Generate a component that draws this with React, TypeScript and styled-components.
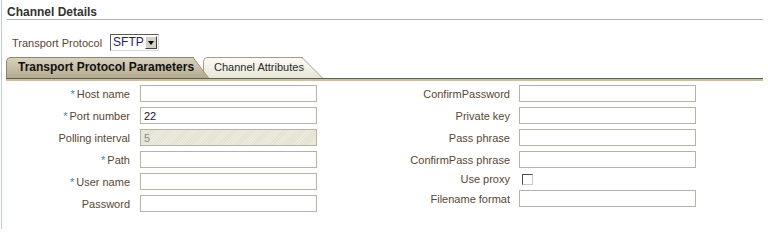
import React from 'react'
import styled, { createGlobalStyle } from 'styled-components'

const GlobalStyle = createGlobalStyle`
  html, body {
    margin: 0;
    padding: 0;
    background: #ffffff;
  }
  body {
    font-family: 'Liberation Sans', Arial, sans-serif;
  }
`

const Page = styled.div`
  margin-left: 1px;
  border-left: 1px solid #b9cbe3;
  padding: 0 5px 0 5px;
  min-height: 229px;
  box-sizing: border-box;
`

const Header = styled.div`
  padding-top: 5px;
  line-height: 14px;
  font-size: 12px;
  font-weight: bold;
  color: #333333;
  border-bottom: 1px solid #b0b0b0;
`

const ProtocolRow = styled.div`
  display: flex;
  align-items: center;
  gap: 8px;
  margin-top: 14px;
  padding-left: 5px;
`

const Label = styled.span`
  font-size: 11px;
  color: #5a4632;
  white-space: nowrap;
`

const SelectBox = styled.div`
  display: flex;
  align-items: stretch;
  width: 49px;
  height: 17px;
  box-sizing: border-box;
  border: 1px solid #5a5a5a;
  border-right-color: #d8d8d8;
  border-bottom-color: #d8d8d8;
  background: #ffffff;
  padding: 1px;
`

const SelectValue = styled.span`
  flex: 1;
  font-size: 12px;
  line-height: 13px;
  color: #2a1a66;
  padding-left: 1px;
`

const SelectButton = styled.span`
  width: 12px;
  box-sizing: border-box;
  background: #d4d0c8;
  border: 1px solid #ffffff;
  border-right-color: #404040;
  border-bottom-color: #404040;
  display: flex;
  align-items: center;
  justify-content: center;

  &::before {
    content: '';
    border-left: 3px solid transparent;
    border-right: 3px solid transparent;
    border-top: 4px solid #000000;
  }
`

const TabStrip = styled.div`
  display: flex;
  align-items: flex-end;
  margin-top: 6px;
  margin-left: -1px;
  height: 21px;
`

const Tab = styled.div<{ $active?: boolean; $width: number; $slant: number }>`
  position: relative;
  z-index: ${({ $active }) => ($active ? 2 : 1)};
  width: ${({ $width }) => $width}px;
  height: 21px;
  box-sizing: border-box;
  margin-left: ${({ $active }) => ($active ? 0 : 9)}px;
  padding-left: ${({ $active }) => ($active ? 11 : 10)}px;
  border: 1px solid ${({ $active }) => ($active ? '#8f8671' : '#a29d89')};
  border-right: none;
  border-bottom: none;
  border-top-left-radius: 5px;
  background: ${({ $active }) =>
    $active ? 'linear-gradient(#d9d1bd, #b3aa8f)' : 'linear-gradient(#fbfaf5, #e9e6d8)'};
  font-size: ${({ $active }) => ($active ? 12 : 11)}px;
  font-weight: ${({ $active }) => ($active ? 'bold' : 'normal')};
  color: ${({ $active }) => ($active ? '#111111' : '#2a2a2a')};
  line-height: 19px;
  white-space: nowrap;

  &::after {
    content: '';
    position: absolute;
    top: -1px;
    right: -${({ $slant }) => $slant}px;
    width: ${({ $slant }) => $slant * 2}px;
    height: 21px;
    background: inherit;
    border-right: 1px solid ${({ $active }) => ($active ? '#8f8671' : '#a29d89')};
    border-top: 1px solid ${({ $active }) => ($active ? '#8f8671' : '#a29d89')};
    box-sizing: border-box;
    transform-origin: bottom left;
    transform: skewX(${({ $slant }) => Math.atan($slant / 20) * (180 / Math.PI)}deg);
    z-index: -1;
  }
`

const TabLine = styled.div`
  margin-left: -1px;
  height: 3px;
  box-sizing: border-box;
  border-top: 1px solid #5b6350;
  background: #cbbfa2;
`

const Form = styled.div`
  display: flex;
  margin-left: -1px;
  padding-top: 4px;
`

const FieldColumn = styled.div<{ $labelWidth: number; $gap: number }>`
  display: grid;
  grid-template-columns: ${({ $labelWidth }) => $labelWidth}px 177px;
  column-gap: ${({ $gap }) => $gap}px;
  row-gap: 5px;
  align-items: center;
  align-content: start;
`

const FieldLabel = styled(Label)`
  text-align: right;
`

const Required = styled.span`
  color: #3f7fc4;
  margin-right: 2px;
`

const TextInput = styled.input`
  width: 177px;
  height: 17px;
  box-sizing: border-box;
  border: 1px solid #b5b2a6;
  padding: 0 3px;
  margin: 0;
  font-family: 'Liberation Sans', Arial, sans-serif;
  font-size: 11px;
  color: #1a0f2e;
  background: #ffffff;
  outline: none;

  &:disabled {
    color: #8c8c8c;
    background: repeating-linear-gradient(135deg, #ecebdf 0 1px, #e4e2d3 1px 2px);
  }
`

const CheckBox = styled.input.attrs({ type: 'checkbox' })`
  appearance: none;
  width: 11px;
  height: 11px;
  margin: 0 0 0 3px;
  box-sizing: border-box;
  border: 1px solid #4a4a4a;
  border-right-color: #c8c8c8;
  border-bottom-color: #c8c8c8;
  background: #ffffff;
`

const CheckCell = styled.div`
  height: 12px;
  display: flex;
  align-items: center;
`

type Field = { label: string; required?: boolean; value?: string; disabled?: boolean; checkbox?: boolean }

const leftFields: Field[] = [
  { label: 'Host name', required: true },
  { label: 'Port number', required: true, value: '22' },
  { label: 'Polling interval', value: '5', disabled: true },
  { label: 'Path', required: true },
  { label: 'User name', required: true },
  { label: 'Password' },
]

const rightFields: Field[] = [
  { label: 'ConfirmPassword' },
  { label: 'Private key' },
  { label: 'Pass phrase' },
  { label: 'ConfirmPass phrase' },
  { label: 'Use proxy', checkbox: true },
  { label: 'Filename format' },
]

const renderFields = (fields: Field[]) =>
  fields.map((f) => (
    <React.Fragment key={f.label}>
      <FieldLabel>
        {f.required && <Required>*</Required>}
        {f.label}
      </FieldLabel>
      {f.checkbox ? (
        <CheckCell>
          <CheckBox readOnly />
        </CheckCell>
      ) : (
        <TextInput defaultValue={f.value} disabled={f.disabled} />
      )}
    </React.Fragment>
  ))

const App: React.FC = () => {
  return (
    <>
      <GlobalStyle />
      <Page>
        <Header>Channel Details</Header>
        <ProtocolRow>
          <Label>Transport Protocol</Label>
          <SelectBox>
            <SelectValue>SFTP</SelectValue>
            <SelectButton />
          </SelectBox>
        </ProtocolRow>
        <TabStrip>
          <Tab $active $width={188} $slant={15}>
            Transport Protocol Parameters
          </Tab>
          <Tab $width={100} $slant={20}>
            Channel Attributes
          </Tab>
        </TabStrip>
        <TabLine />
        <Form>
          <FieldColumn $labelWidth={124} $gap={10}>
            {renderFields(leftFields)}
          </FieldColumn>
          <FieldColumn $labelWidth={193} $gap={9}>
            {renderFields(rightFields)}
          </FieldColumn>
        </Form>
      </Page>
    </>
  )
}

export default App
